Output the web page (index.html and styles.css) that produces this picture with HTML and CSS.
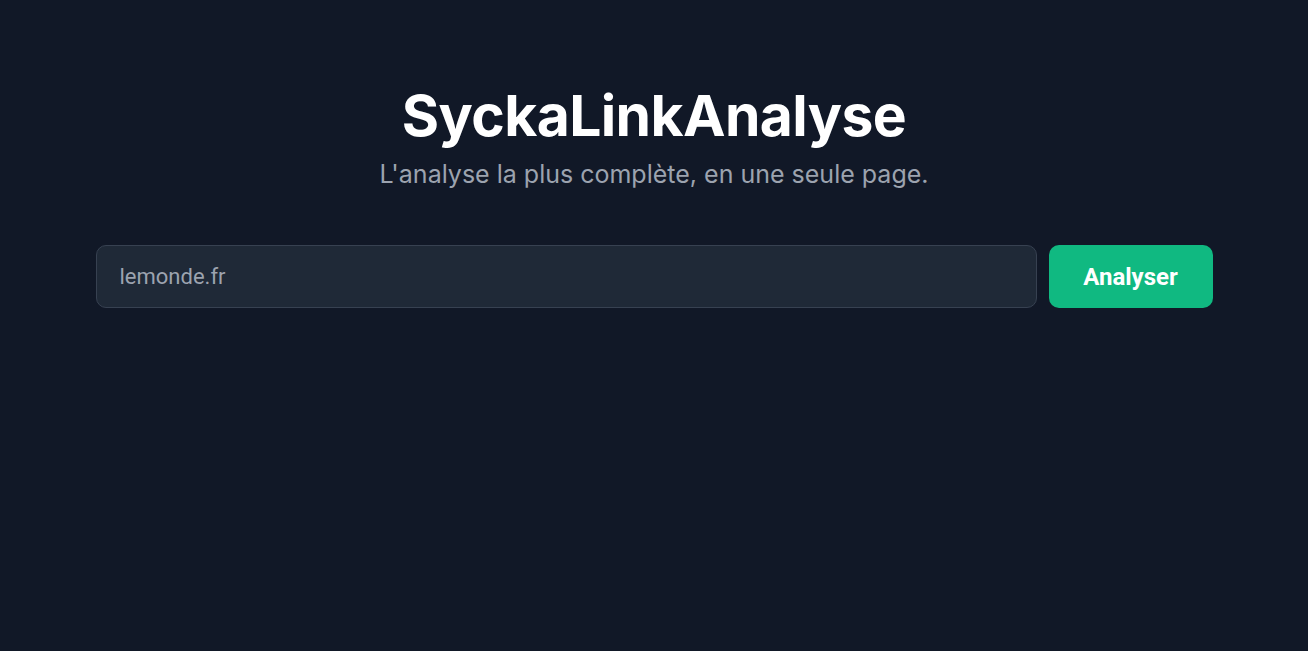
FILE: index.html
```html
<!DOCTYPE html>
<html lang="fr">
<head>
    <meta charset="UTF-8">
    <meta name="viewport" content="width=device-width, initial-scale=1.0">
    <title>SyckaLinkAnalyse</title>
    <link rel="stylesheet" href="styles.css">
</head>
<body>
    <div class="container">
        <header class="hero">
            <h1>SyckaLinkAnalyse</h1>
            <p class="tagline">L'analyse la plus complète, en une seule page.</p>
        </header>

        <form class="search" onsubmit="return false">
            <input type="text" id="domain" placeholder="lemonde.fr">
            <button type="submit">Analyser</button>
        </form>
    </div>
</body>
</html>
```

FILE: styles.css
```css
body {
    margin: 0;
    padding: 0;
    background-color: #111827;
    font-family: Inter, "Noto Sans", sans-serif;
    color: #fff;
}

.container {
    max-width: 1117px;
    margin: 0 auto;
    padding-top: 80px;
}

.hero {
    text-align: center;
}

h1 {
    margin: 0;
    font-size: 57px;
    font-weight: 700;
    line-height: 72px;
    letter-spacing: -0.6px;
}

.tagline {
    margin: 6px 0 0;
    font-size: 25px;
    line-height: 32px;
    color: #9ca3af;
}

.search {
    display: flex;
    gap: 12px;
    margin-top: 55px;
}

.search input {
    flex: 1;
    height: 63px;
    box-sizing: border-box;
    padding: 0 23px;
    background-color: #1f2937;
    border: 1px solid #374151;
    border-radius: 10px;
    font-family: Roboto, sans-serif;
    font-size: 22px;
    color: #fff;
    outline: none;
}

.search input::placeholder {
    color: #9ca3af;
}

.search button {
    width: 164px;
    height: 63px;
    border: none;
    border-radius: 10px;
    background-color: #10b981;
    color: #fff;
    font-family: Roboto, sans-serif;
    font-size: 24px;
    font-weight: 700;
    cursor: pointer;
}
```
